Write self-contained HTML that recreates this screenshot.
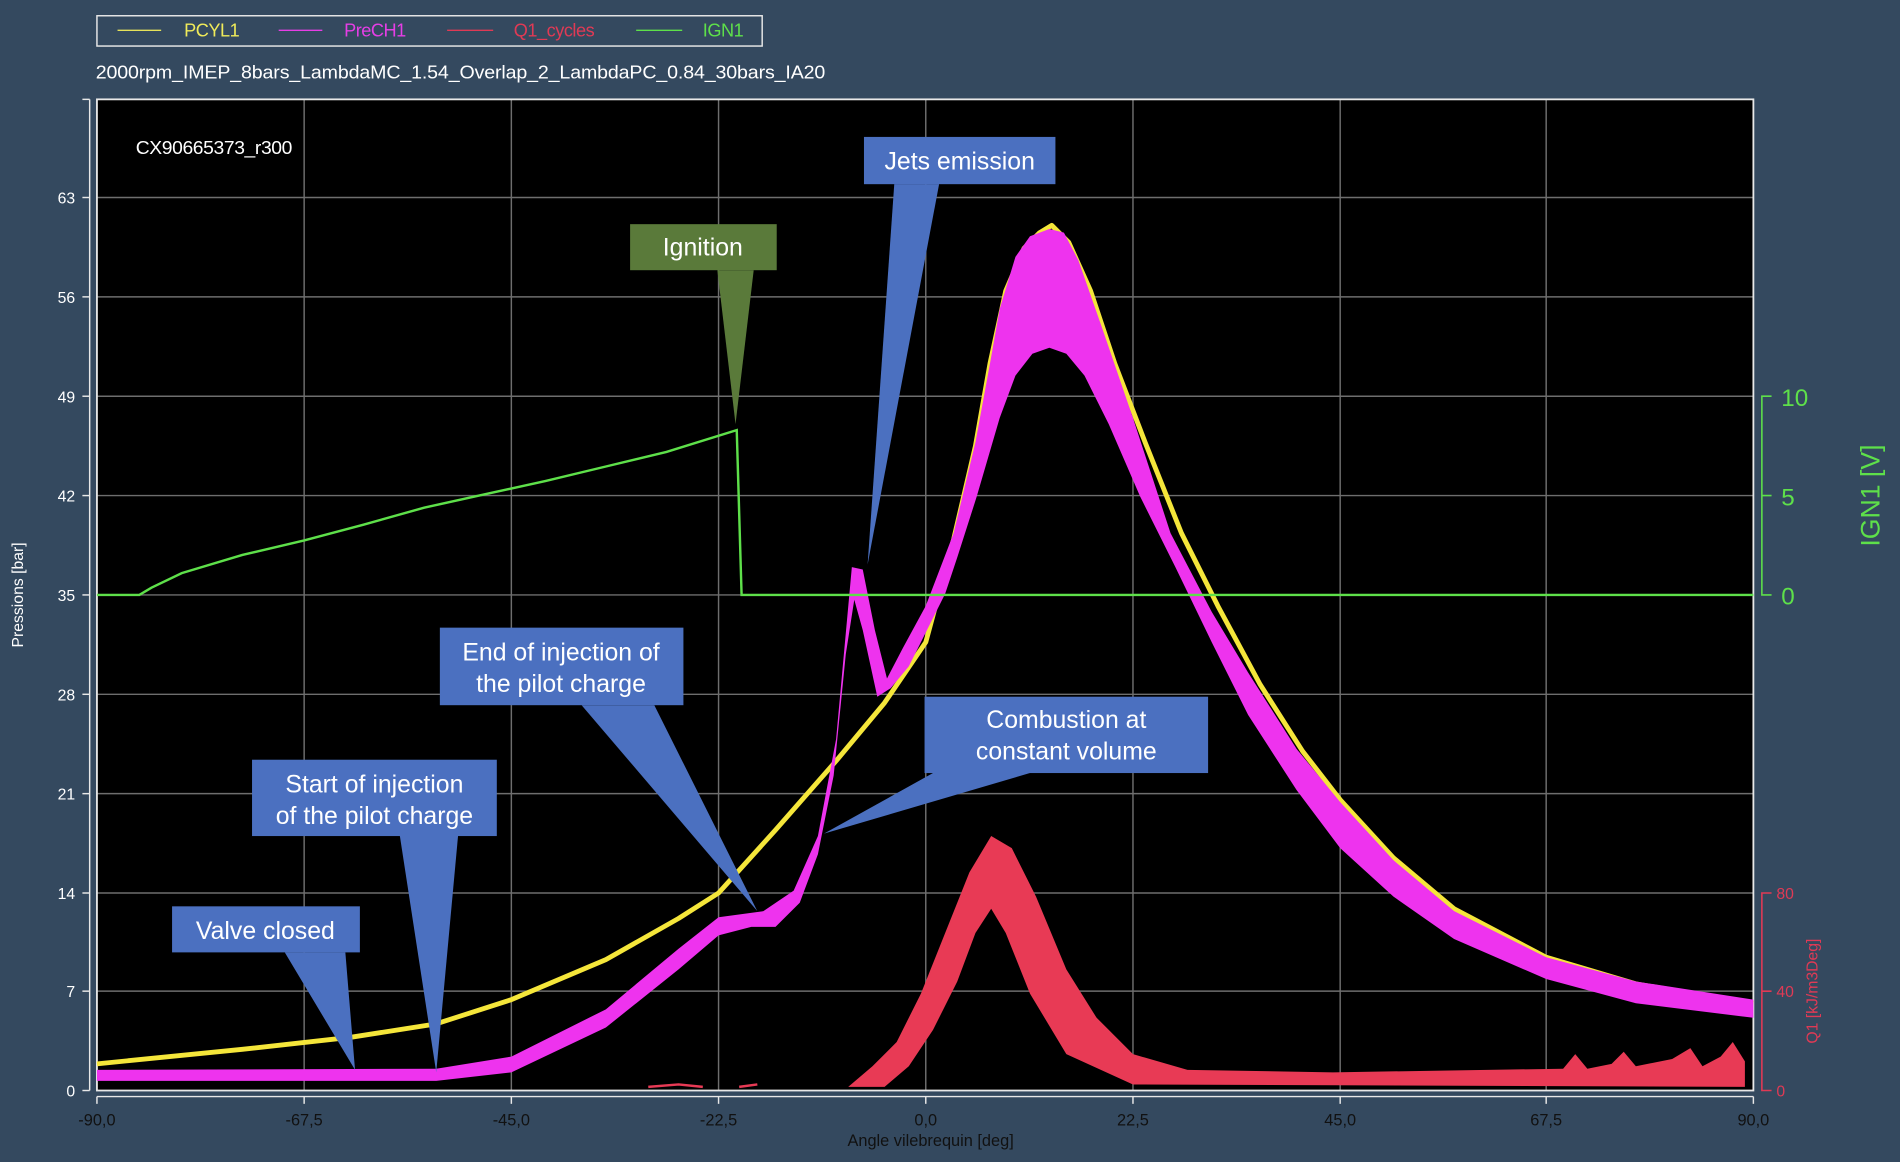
<!DOCTYPE html>
<html><head><meta charset="utf-8"><style>
html,body{margin:0;padding:0;background:#34495f;}
svg{display:block}
text{font-family:"Liberation Sans",sans-serif}
</style></head><body>
<svg width="1900" height="1162" viewBox="0 0 1568 959" preserveAspectRatio="none" xmlns="http://www.w3.org/2000/svg">
<rect width="1568" height="959" fill="#34495f"/>
<!-- legend -->
<rect x="80" y="13" width="549" height="25" fill="none" stroke="#e8e8e8" stroke-width="1.2"/>
<line x1="97" y1="25" x2="133" y2="25" stroke="#e6e25a" stroke-width="1.2"/>
<text x="152" y="30" fill="#f0eb5a" font-size="15" letter-spacing="-0.4">PCYL1</text>
<line x1="230" y1="25" x2="266" y2="25" stroke="#e63ee6" stroke-width="1.2"/>
<text x="284" y="30" fill="#e63ee6" font-size="15" letter-spacing="-0.4">PreCH1</text>
<line x1="369" y1="25" x2="407" y2="25" stroke="#e03a55" stroke-width="1.2"/>
<text x="424" y="30" fill="#e03a55" font-size="15" letter-spacing="-0.4">Q1_cycles</text>
<line x1="525" y1="25" x2="563" y2="25" stroke="#5ee04a" stroke-width="1.2"/>
<text x="580" y="30" fill="#5ee04a" font-size="15" letter-spacing="-0.4">IGN1</text>
<text x="79" y="65" fill="#ffffff" font-size="15.5" letter-spacing="-0.1" textLength="602" lengthAdjust="spacingAndGlyphs">2000rpm_IMEP_8bars_LambdaMC_1.54_Overlap_2_LambdaPC_0.84_30bars_IA20</text>
<!-- plot -->
<rect x="80" y="82" width="1367" height="818" fill="#000"/>
<g stroke="#6e6e6e" stroke-width="1.2">
<line x1="251" y1="82" x2="251" y2="900"/><line x1="422" y1="82" x2="422" y2="900"/>
<line x1="593" y1="82" x2="593" y2="900"/><line x1="764" y1="82" x2="764" y2="900"/>
<line x1="935" y1="82" x2="935" y2="900"/><line x1="1106" y1="82" x2="1106" y2="900"/>
<line x1="1276" y1="82" x2="1276" y2="900"/>
<line x1="80" y1="163" x2="1447" y2="163"/><line x1="80" y1="245" x2="1447" y2="245"/>
<line x1="80" y1="327" x2="1447" y2="327"/><line x1="80" y1="409" x2="1447" y2="409"/>
<line x1="80" y1="491" x2="1447" y2="491"/><line x1="80" y1="573" x2="1447" y2="573"/>
<line x1="80" y1="655" x2="1447" y2="655"/><line x1="80" y1="737" x2="1447" y2="737"/>
<line x1="80" y1="818" x2="1447" y2="818"/>
</g>
<rect x="80" y="82" width="1367" height="818" fill="none" stroke="#e8e8e8" stroke-width="1.5"/>
<text x="112" y="127" fill="#fff" font-size="15.5" letter-spacing="-0.3" textLength="129" lengthAdjust="spacingAndGlyphs">CX90665373_r300</text>
<!-- left axis -->
<g stroke="#e8e8e8" stroke-width="1.2"><line x1="74" y1="82" x2="74" y2="900"/><line x1="68" y1="82" x2="74" y2="82"/>
<line x1="68" y1="163" x2="74" y2="163"/><line x1="68" y1="245" x2="74" y2="245"/><line x1="68" y1="327" x2="74" y2="327"/><line x1="68" y1="409" x2="74" y2="409"/><line x1="68" y1="491" x2="74" y2="491"/><line x1="68" y1="573" x2="74" y2="573"/><line x1="68" y1="655" x2="74" y2="655"/><line x1="68" y1="737" x2="74" y2="737"/><line x1="68" y1="818" x2="74" y2="818"/><line x1="68" y1="900" x2="74" y2="900"/></g>
<g fill="#fff" font-size="13" text-anchor="end">
<text x="62" y="168">63</text><text x="62" y="250">56</text><text x="62" y="332">49</text><text x="62" y="414">42</text><text x="62" y="496">35</text><text x="62" y="578">28</text><text x="62" y="660">21</text><text x="62" y="742">14</text><text x="62" y="823">7</text><text x="62" y="905">0</text>
</g>
<text transform="translate(19,491) rotate(-90)" fill="#fff" font-size="13" text-anchor="middle">Pressions [bar]</text>
<!-- bottom axis -->
<g stroke="#e8e8e8" stroke-width="1.2"><line x1="80" y1="905" x2="1447" y2="905"/>
<line x1="80" y1="905" x2="80" y2="911"/><line x1="251" y1="905" x2="251" y2="911"/><line x1="422" y1="905" x2="422" y2="911"/><line x1="593" y1="905" x2="593" y2="911"/><line x1="764" y1="905" x2="764" y2="911"/><line x1="935" y1="905" x2="935" y2="911"/><line x1="1106" y1="905" x2="1106" y2="911"/><line x1="1276" y1="905" x2="1276" y2="911"/><line x1="1447" y1="905" x2="1447" y2="911"/></g>
<g fill="#111" font-size="13.5" text-anchor="middle">
<text x="80" y="929">-90,0</text><text x="251" y="929">-67,5</text><text x="422" y="929">-45,0</text><text x="593" y="929">-22,5</text><text x="764" y="929">0,0</text><text x="935" y="929">22,5</text><text x="1106" y="929">45,0</text><text x="1276" y="929">67,5</text><text x="1447" y="929">90,0</text>
</g>
<text x="768" y="946" fill="#111" font-size="13.5" text-anchor="middle">Angle vilebrequin [deg]</text>
<!-- right IGN axis -->
<path d="M1462 327 H1454 V491 H1462 M1454 409 H1462" fill="none" stroke="#5ee04a" stroke-width="1.3"/>
<g fill="#5ee04a" font-size="20"><text x="1470" y="335">10</text><text x="1470" y="417">5</text><text x="1470" y="499">0</text></g>
<text transform="translate(1551,409) rotate(-90)" fill="#5ee04a" font-size="22" text-anchor="middle">IGN1 [V]</text>
<!-- right Q1 axis -->
<path d="M1462 737 H1454 V900 H1462 M1454 818 H1462" fill="none" stroke="#e03a55" stroke-width="1.3"/>
<g fill="#e03a55" font-size="13"><text x="1466" y="742">80</text><text x="1466" y="823">40</text><text x="1466" y="905">0</text></g>
<text transform="translate(1500,818) rotate(-90)" fill="#e03a55" font-size="13" text-anchor="middle">Q1 [kJ/m3Deg]</text>
<!-- data -->
<path d="M80 878 L200 866 L290 856 L360 845 L422 825 L500 792 L560 758 L593 737 L640 685 L690 628 L730 580 L764 530 L787 445 L805 368 L817 300 L830 240 L845 205 L858 192 L868 186 L882 200 L900 240 L920 300 L945 365 L975 440 L1005 500 L1040 565 L1075 620 L1106 660 L1150 708 L1200 750 L1276 790 L1350 812 L1447 828" fill="none" stroke="#f5e63a" stroke-width="4" stroke-linejoin="round"/>
<path d="M80 883 L360 882 L422 872 L500 833 L560 783 L593 757 L630 752 L655 735 L675 690 L690 610 L703 468 L712 470 L722 520 L732 560 L745 535 L764 500 L787 440 L805 365 L817 300 L825 255 L838 212 L850 195 L866 189 L878 192 L890 215 L910 272 L935 345 L966 440 L1000 505 L1030 555 L1070 618 L1106 662 L1150 710 L1200 752 L1276 790 L1350 810 L1447 825 L1447 840 L1350 828 L1276 808 L1200 775 L1150 740 L1106 700 L1070 652 L1030 590 L1000 530 L970 468 L941 410 L915 350 L895 310 L880 292 L866 287 L852 292 L838 310 L825 345 L806 410 L790 460 L780 490 L764 522 L750 550 L735 568 L724 575 L712 520 L705 495 L698 540 L688 640 L675 705 L660 745 L640 765 L620 765 L593 772 L560 800 L500 848 L422 885 L360 892 L80 892 Z" fill="#ee33ee"/>
<path d="M700 897 L720 880 L740 860 L760 820 L780 770 L800 720 L818 690 L835 700 L855 740 L880 800 L905 840 L935 870 L980 883 L1100 885 L1290 882 L1300 870 L1310 882 L1330 878 L1340 868 L1350 880 L1380 874 L1395 865 L1405 880 L1420 872 L1430 860 L1440 876 L1440 897 L935 895 L880 870 L850 820 L830 770 L818 750 L805 770 L790 810 L770 850 L750 880 L730 897 Z" fill="#e83a55"/>
<path d="M535 897 L560 895 L580 897 M610 897 L625 895" stroke="#e83a55" stroke-width="2" fill="none"/>
<path d="M80 491 L115 491 L125 485 L150 473 L200 458 L251 446 L300 433 L350 419 L400 408 L450 397 L500 385 L550 373 L608 355 L612 491 L1447 491" fill="none" stroke="#5ee04a" stroke-width="2"/>
<!-- annotations -->
<g fill="#4b70c0">
<rect x="713" y="113" width="158" height="39"/><path d="M738 152 L775 152 L716 466 Z"/>
<rect x="363" y="518" width="201" height="64"/><path d="M480 582 L540 582 L625 752 Z"/>
<rect x="763" y="575" width="234" height="63"/><path d="M770 638 L850 638 L680 688 Z"/>
<rect x="208" y="627" width="202" height="63"/><path d="M330 690 L378 690 L360 885 Z"/>
<rect x="142" y="748" width="155" height="38"/><path d="M235 786 L285 786 L293 883 Z"/>
</g>
<g fill="#5a7a3a"><rect x="520" y="185" width="121" height="38"/><path d="M592 223 L622 223 L607 350 Z"/></g>
<g fill="#fff" font-size="20.5" text-anchor="middle">
<text x="792" y="140">Jets emission</text>
<text x="580" y="211">Ignition</text>
<text x="463" y="545">End of injection of</text><text x="463" y="571">the pilot charge</text>
<text x="880" y="601">Combustion at</text><text x="880" y="627">constant volume</text>
<text x="309" y="654">Start of injection</text><text x="309" y="680">of the pilot charge</text>
<text x="219" y="775">Valve closed</text>
</g>
</svg>
</body></html>
